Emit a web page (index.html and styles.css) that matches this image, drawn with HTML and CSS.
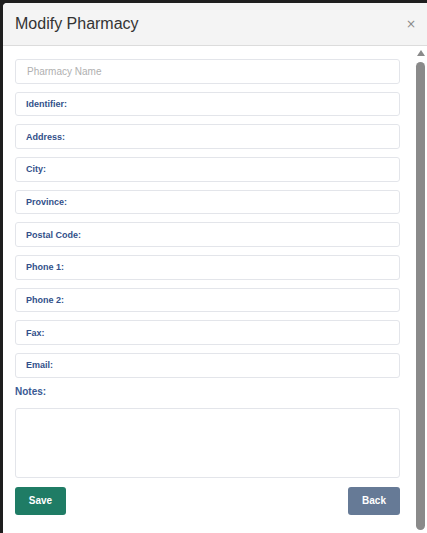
FILE: index.html
```html
<!DOCTYPE html>
<html lang="en">
<head>
  <meta charset="UTF-8">
  <title>Modify Pharmacy</title>
  <link rel="stylesheet" href="styles.css">
</head>
<body>

  <div class="modal">
    <div class="modal-header">
      <h1>Modify Pharmacy</h1>
      <button class="close">&times;</button>
    </div>

    <div class="modal-body">
      <form class="form">
        <input type="text" class="name" placeholder="Pharmacy Name">
        <label class="field"><span>Identifier:</span><input type="text"></label>
        <label class="field"><span>Address:</span><input type="text"></label>
        <label class="field"><span>City:</span><input type="text"></label>
        <label class="field"><span>Province:</span><input type="text"></label>
        <label class="field"><span>Postal Code:</span><input type="text"></label>
        <label class="field"><span>Phone 1:</span><input type="text"></label>
        <label class="field"><span>Phone 2:</span><input type="text"></label>
        <label class="field"><span>Fax:</span><input type="text"></label>
        <label class="field"><span>Email:</span><input type="text"></label>

        <div class="notes-label">Notes:</div>
        <textarea class="notes"></textarea>

        <div class="actions">
          <button type="button" class="btn save">Save</button>
          <button type="button" class="btn back">Back</button>
        </div>
      </form>

      <div class="scrollbar">
        <div class="arrow"></div>
        <div class="thumb"></div>
      </div>
    </div>
  </div>

</body>
</html>
```

FILE: styles.css
```css
html, body { margin: 0; height: 100%; overflow: hidden; }
body { background: #1e1e1e; padding: 3px 0 0 3px; box-sizing: border-box; font-family: "Liberation Sans", Arial, sans-serif; }

.modal { background: #fff; border-top-left-radius: 4px; height: 100%; overflow: hidden; }
.modal-header { display: flex; align-items: center; justify-content: space-between; height: 42px; padding: 0 11px 0 12px; background: #f4f4f4; border-bottom: 1px solid #dcdcdc; border-top-left-radius: 4px; }
.modal-header h1 { margin: 0; font-size: 16px; font-weight: normal; color: #333; }
.close { border: 0; background: none; color: #8a8a8a; font-size: 12px; padding: 0; cursor: pointer; font-family: "DejaVu Sans", sans-serif; }

.modal-body { display: flex; }
.form { width: 385px; padding: 13px 0 0 12px; display: flex; flex-direction: column; }

.name, .field { box-sizing: border-box; height: 24.67px; margin: 0 0 8px; border: 1px solid #e3e5ea; border-radius: 3px; }
.name { padding: 0 11px; font-family: inherit; font-size: 10px; }
.name::placeholder { color: #b0b0b0; }
.field { display: flex; align-items: center; padding: 0 0 0 10px; }
.field span { font-size: 9px; font-weight: bold; color: #32508a; white-space: nowrap; }
.field input { flex: 1; border: 0; outline: none; min-width: 0; height: 100%; background: none; }

.notes-label { margin: 0; font-size: 10px; font-weight: bold; color: #3a5a94; }
.notes { box-sizing: border-box; height: 70px; margin: 11px 0 9px; border: 1px solid #e3e5ea; border-radius: 3px; resize: none; }

.actions { display: flex; justify-content: space-between; }
.btn { height: 28px; border: 0; border-radius: 3px; color: #fff; font-family: inherit; font-size: 10px; font-weight: bold; cursor: pointer; }
.save { width: 51px; background: #1f7c65; }
.back { width: 52px; background: #667a96; }

.scrollbar { margin-left: 15px; width: 11px; padding-top: 4px; display: flex; flex-direction: column; align-items: center; }
.arrow { width: 0; height: 0; border-left: 4px solid transparent; border-right: 4px solid transparent; border-bottom: 6px solid #8a8a8a; }
.thumb { width: 9px; height: 468px; margin-top: 6px; background: #8a8a8a; border-radius: 5px; }
```
